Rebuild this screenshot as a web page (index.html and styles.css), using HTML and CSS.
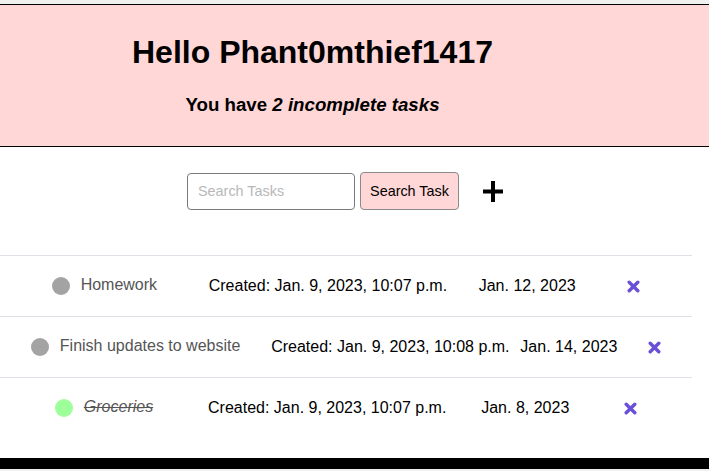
FILE: index.html
```html
<!DOCTYPE html>
<html lang="en">
<head>
<meta charset="utf-8">
<title>Tasks</title>
<link rel="stylesheet" href="styles.css">
</head>
<body>
<div class="page">
  <header class="hero">
    <h1 class="hero-title">Hello Phant0mthief1417</h1>
    <h3 class="hero-sub">You have <em>2 incomplete tasks</em></h3>
  </header>
  <main class="main">
    <form class="search">
      <input class="search-input" type="text" placeholder="Search Tasks">
      <button class="search-btn" type="button">Search Task</button>
      <a class="add" href="#" aria-label="Add task">
        <svg width="20" height="21" viewBox="0 0 20 21"><rect x="8" y="0" width="4" height="21" fill="#000"/><rect x="0" y="8.5" width="20" height="4" fill="#000"/></svg>
      </a>
    </form>
    <div class="tasks">
      <div class="task">
        <div class="task-name"><span class="dot"></span><span class="name">Homework</span></div>
        <span class="created">Created: Jan. 9, 2023, 10:07 p.m.</span>
        <span class="due">Jan. 12, 2023</span>
        <a class="del" href="#" aria-label="Delete"><svg width="13" height="13" viewBox="0 0 13 13"><path d="M2.2 2.2 L10.8 10.8 M10.8 2.2 L2.2 10.8" stroke="#6a4fd8" stroke-width="3.4" stroke-linecap="round"/></svg></a>
      </div>
      <div class="task">
        <div class="task-name"><span class="dot"></span><span class="name">Finish updates to website</span></div>
        <span class="created">Created: Jan. 9, 2023, 10:08 p.m.</span>
        <span class="due">Jan. 14, 2023</span>
        <a class="del" href="#" aria-label="Delete"><svg width="13" height="13" viewBox="0 0 13 13"><path d="M2.2 2.2 L10.8 10.8 M10.8 2.2 L2.2 10.8" stroke="#6a4fd8" stroke-width="3.4" stroke-linecap="round"/></svg></a>
      </div>
      <div class="task">
        <div class="task-name"><span class="dot dot-done"></span><span class="name name-done">Groceries</span></div>
        <span class="created">Created: Jan. 9, 2023, 10:07 p.m.</span>
        <span class="due">Jan. 8, 2023</span>
        <a class="del" href="#" aria-label="Delete"><svg width="13" height="13" viewBox="0 0 13 13"><path d="M2.2 2.2 L10.8 10.8 M10.8 2.2 L2.2 10.8" stroke="#6a4fd8" stroke-width="3.4" stroke-linecap="round"/></svg></a>
      </div>
    </div>
  </main>
  <footer class="footer"></footer>
</div>
</body>
</html>
```

FILE: styles.css
```css
html {
  background: #f0f0f0;
}
body {
  margin: 0;
  padding-top: 4px;
  font-family: "Liberation Sans", Arial, sans-serif;
  color: #000;
}
.page {
  background: #fff;
}
.hero {
  background: #ffd7d7;
  border-top: 1px solid #000;
  border-bottom: 1px solid #000;
  padding: 29px 84px 30px 0;
  text-align: center;
}
.hero-title {
  margin: 0;
  font-size: 32px;
  font-weight: bold;
  line-height: 37px;
}
.hero-sub {
  margin: 23px 0 0;
  font-size: 18.7px;
  font-weight: bold;
  line-height: 22px;
}
.hero-sub em {
  font-style: italic;
}
.main {
  width: 692px;
}
.search {
  display: flex;
  align-items: center;
  justify-content: center;
  margin: 0;
  padding: 25px 2px 45px 0;
}
.search-input {
  box-sizing: border-box;
  width: 168px;
  height: 37px;
  border: 1px solid #7a7a7a;
  border-radius: 4px;
  padding: 0 10px;
  font-family: "Liberation Sans", Arial, sans-serif;
  font-size: 14.4px;
  color: #000;
  background: #fff;
}
.search-input::placeholder {
  color: #b8b8b8;
}
.search-btn {
  box-sizing: border-box;
  margin-left: 5px;
  width: 99px;
  height: 38px;
  background: #ffd7d7;
  border: 1px solid #8a8a8a;
  border-radius: 4px;
  font-family: "Liberation Sans", Arial, sans-serif;
  font-size: 14.4px;
  color: #000;
  padding: 0;
}
.add {
  display: flex;
  margin-left: 24px;
}
.tasks {
  display: flex;
  flex-direction: column;
}
.task {
  display: flex;
  align-items: center;
  justify-content: space-evenly;
  height: 60px;
  border-top: 1px solid #dee2e6;
  font-size: 16px;
}
.task-name {
  display: flex;
  align-items: center;
  gap: 11px;
}
.dot {
  width: 18px;
  height: 18px;
  border-radius: 50%;
  background: #a3a3a3;
}
.dot-done {
  background: #9dff99;
}
.name {
  color: #555;
  position: relative;
  top: -1px;
}
.name-done {
  font-style: italic;
  text-decoration: line-through;
}
.due {
  margin-left: -20px;
}
.del {
  display: flex;
}
.footer {
  margin-top: 20px;
  height: 11px;
  background: #000;
}
```
